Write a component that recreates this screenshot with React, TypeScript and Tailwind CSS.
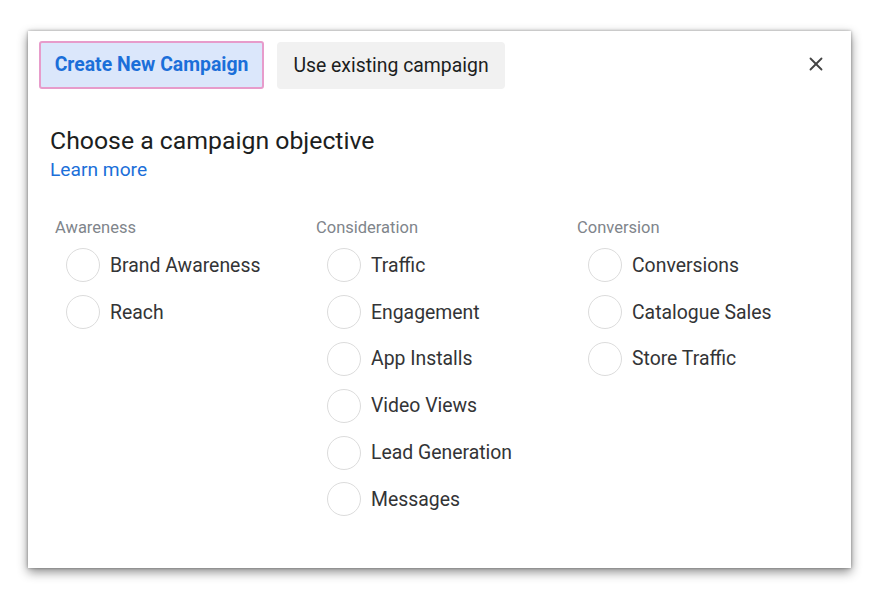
import { X } from 'lucide-react';

const columns = [
  { title: 'Awareness', items: ['Brand Awareness', 'Reach'] },
  { title: 'Consideration', items: ['Traffic', 'Engagement', 'App Installs', 'Video Views', 'Lead Generation', 'Messages'] },
  { title: 'Conversion', items: ['Conversions', 'Catalogue Sales', 'Store Traffic'] },
];

export default function App() {
  return (
    <div className="min-h-[600px] w-[879px] bg-white pl-[28px] pt-[31px] font-['Roboto',sans-serif]">
      <div className="relative h-[537px] w-[823px] bg-white shadow-[0_4px_10px_rgba(0,0,0,0.45),0_0_3px_rgba(0,0,0,0.35)]">
        <div className="flex gap-[13px] pl-[11px] pt-[10px]">
          <button className="h-[48px] w-[225px] rounded-[3px] border-2 border-[#e79ccb] bg-[#dbe7fb] text-[19.4px] font-bold text-[#1b6fd9]">
            Create New Campaign
          </button>
          <button className="mt-[1px] h-[47px] w-[228px] rounded-[4px] bg-[#f1f1f1] text-[19.4px] text-[#1c1e21]">
            Use existing campaign
          </button>
        </div>
        <button className="absolute right-[24px] top-[22px] text-[#444]">
          <X className="h-[22px] w-[22px]" strokeWidth={2} />
        </button>

        <div className="pl-[22px] pt-[37px]">
          <h2 className="text-[24.8px] leading-[30px] text-[#1c1e21]">Choose a campaign objective</h2>
          <a className="mt-[2px] block text-[19.2px] leading-[24px] text-[#1b6fd9]">Learn more</a>
        </div>

        <div className="mt-[36px] grid grid-cols-[261px_261px_261px] pl-[27px]">
          {columns.map((col) => (
            <div key={col.title}>
              <div className="text-[16.5px] leading-[20px] text-[#80858b]">{col.title}</div>
              <div className="mt-[4px] flex flex-col">
                {col.items.map((item) => (
                  <div key={item} className="flex h-[46.8px] items-center pl-[11px]">
                    <span className="h-[34px] w-[34px] rounded-full border border-[#dcdcdc] bg-white" />
                    <span className="ml-[10px] text-[19.4px] text-[#333436]">{item}</span>
                  </div>
                ))}
              </div>
            </div>
          ))}
        </div>
      </div>
    </div>
  );
}
